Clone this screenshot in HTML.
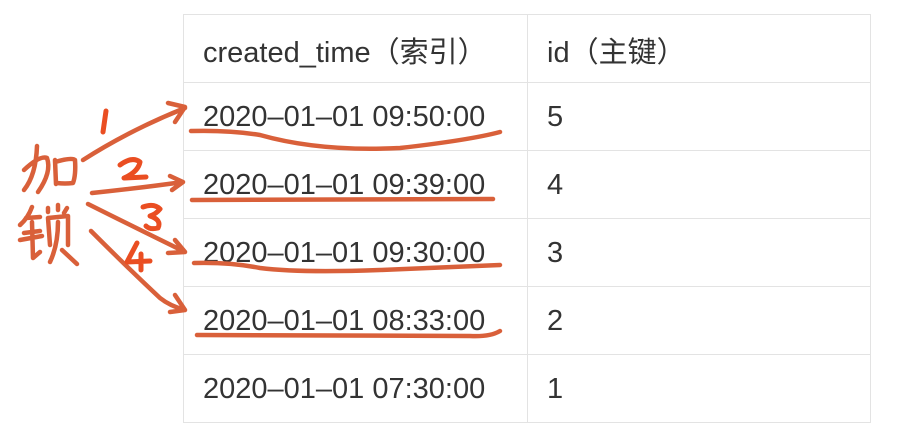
<!DOCTYPE html>
<html><head><meta charset="utf-8"><style>
body{margin:0;width:898px;height:448px;background:#fff;position:relative;overflow:hidden;font-family:"Liberation Sans","Noto Sans CJK SC",sans-serif;}
table{position:absolute;left:183px;top:14px;border-collapse:collapse;}
tr{height:68px;}
td{border:1.5px solid #e3e3e3;padding:2px 0 0 19px;font-size:29px;color:#333;vertical-align:middle;box-sizing:border-box;}
td.a{width:344px;}
td.b{width:343px;}
svg{position:absolute;left:0;top:0;}
</style></head><body>
<table>
<tr><td class="a">created_time（索引）</td><td class="b">id（主键）</td></tr>
<tr><td class="a">2020–01–01 09:50:00</td><td class="b">5</td></tr>
<tr><td class="a">2020–01–01 09:39:00</td><td class="b">4</td></tr>
<tr><td class="a">2020–01–01 09:30:00</td><td class="b">3</td></tr>
<tr><td class="a">2020–01–01 08:33:00</td><td class="b">2</td></tr>
<tr><td class="a">2020–01–01 07:30:00</td><td class="b">1</td></tr>
</table>
<svg width="898" height="448" fill="none" stroke="#d9603a" stroke-width="4.5" stroke-linecap="round" stroke-linejoin="round">
<path d="M24 170 Q40 155 47 158 Q52 172 38 192 M37 146 Q36 175 24 190 M55 160 L56 184 M55 162 Q72 157 75 160 Q76 175 73 183 Q65 184 57 183"/>
<path d="M32 207 Q28 218 20 225 M26 218 L40 217 M24 233 L40 231 M32 222 L33 258 L40 252 M20 240 L42 236 M48 208 L48 212 M58 205 L58 210 M67 208 L64 213 M48 218 L50 245 M48 218 L68 216 L68 245 M58 222 Q58 245 50 262 M62 250 L77 264"/>
<path d="M83 160 Q130 130 185 108 M168 103 L185 107 L175 122"/>
<path d="M92 193 Q140 188 183 182 M170 176 L183 182 L172 190"/>
<path d="M88 204 Q140 230 183 251 M175 240 L185 252 L168 253"/>
<path d="M91 231 Q130 270 160 298 Q170 306 185 310 M175 295 L185 310 L170 312"/>
<path d="M191 131 Q230 130 260 135 Q320 152 400 148 Q470 140 500 132"/>
<path d="M192 200 L493 199"/>
<path d="M194 263 Q230 262 260 268 Q300 273 380 270 L500 265"/>
<path d="M197 335 L470 336 Q490 337 500 331"/>
</svg>
<svg width="898" height="448" fill="none" stroke="#ea4e22" stroke-width="5" stroke-linecap="round" stroke-linejoin="round">
<path d="M106 111 L103 132"/>
<path d="M120 165 Q132 156 140 162 Q138 172 124 178 L146 177"/>
<path d="M143 207 Q154 203 160 209 Q156 214 150 216 Q162 220 158 228 Q150 230 146 226"/>
<path d="M137 243 L127 262 L150 261 M141 254 L141 270"/>
</svg>
</body></html>
